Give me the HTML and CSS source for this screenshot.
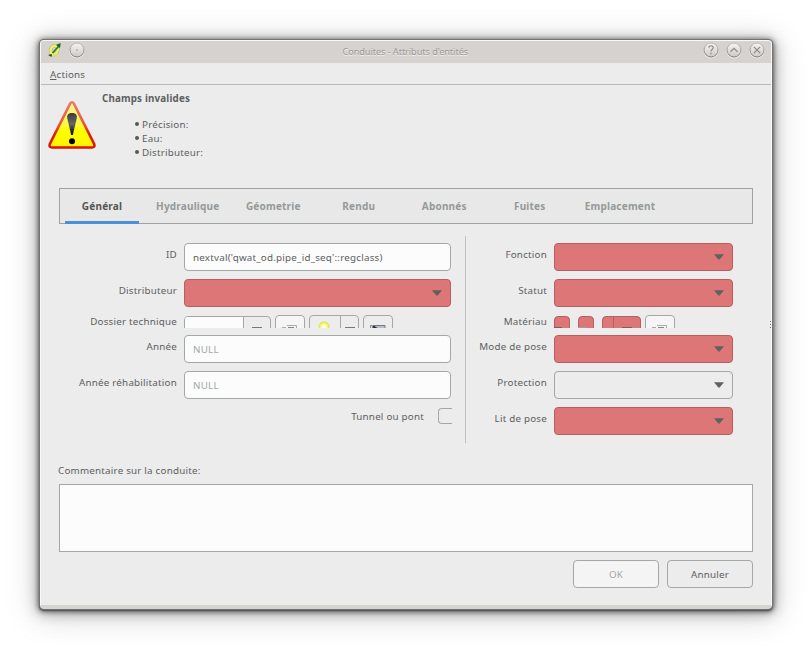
FILE: index.html
```html
<!DOCTYPE html>
<html lang="fr">
<head>
<meta charset="utf-8">
<title>Conduites - Attributs d'entités</title>
<link rel="stylesheet" href="styles.css">
</head>
<body>
<svg class="defs" width="0" height="0">
  <defs>
    <linearGradient id="knob" x1="0" y1="0" x2="0" y2="1"><stop offset="0" stop-color="#f6f5f4"/><stop offset="1" stop-color="#cdc9c5"/></linearGradient>
    <linearGradient id="ring" x1="0" y1="0" x2="0" y2="1"><stop offset="0" stop-color="#c0bbb7"/><stop offset="1" stop-color="#7c7875"/></linearGradient>
    <linearGradient id="warnFill" x1="0" y1="0" x2="0" y2="1"><stop offset="0" stop-color="#fff3a0"/><stop offset=".5" stop-color="#fff83a"/><stop offset=".62" stop-color="#ffff00"/><stop offset="1" stop-color="#fff200"/></linearGradient>
    <linearGradient id="warnEdge" x1="0" y1="0" x2="0" y2="1"><stop offset="0" stop-color="#ec7b6c"/><stop offset=".5" stop-color="#e8503c"/><stop offset=".7" stop-color="#e21b06"/><stop offset="1" stop-color="#dd1500"/></linearGradient>
    <linearGradient id="warnMark" x1="0" y1="0" x2="0" y2="1"><stop offset="0" stop-color="#3c3c3c"/><stop offset=".5" stop-color="#666"/><stop offset="1" stop-color="#000"/></linearGradient>
    <symbol id="tri" viewBox="0 0 10 6"><path d="M0 .3H10L5.8 5.3Q5 6 4.2 5.3Z" fill="currentColor"/></symbol>
    <symbol id="form" viewBox="0 0 16 4"><path d="M0 2.500H4M0 3.500H5" stroke="#aaa"/><path d="M5 .5H14.500V4" fill="none" stroke="#aaa"/><path d="M6 2.500H12M6.500 4V2" fill="none" stroke="#888"/></symbol>
  </defs>
</svg>
<main class="window">
  <header class="titlebar">
    <svg class="app" width="14" height="16" viewBox="0 0 14 16"><path d="M9 3.500C6.500 1.500 3 3.500 2.500 7.500C2.200 11 5 12.500 7.500 11C10 9 10.500 5.500 9 3.500" fill="none" stroke="#b9bb4c" stroke-width="3.400"/><path d="M9 3.500C6.500 1.500 3 3.500 2.500 7.500C2.200 11 5 12.500 7.500 11C10 9 10.500 5.500 9 3.500" fill="none" stroke="#eeee7c" stroke-width="2.400"/><path d="M5 11C7.500 10.500 8 15 11.500 14" fill="none" stroke="#dde070" stroke-width="2"/><path d="M4.500 10L10.500 3.500" stroke="#2b7a2b" stroke-width="1.800"/><path d="M8 2L12.700 0L12 5Z" fill="#14671d"/><path d="M0 12L4 11L3.500 14Z" fill="#2c4b22"/></svg>
    <svg class="knob" width="16" height="17" viewBox="0 0 16 17"><circle cx="8" cy="8" r="7" fill="url(#knob)" stroke="url(#ring)"/><circle cx="8" cy="8" r=".8" fill="#999"/></svg>
    <h1>Conduites - Attributs d'entités</h1>
    <svg class="knob" width="16" height="17" viewBox="0 0 16 17"><circle cx="8" cy="8" r="7" fill="url(#knob)" stroke="url(#ring)"/><path d="M5.800 5.800C5.800 3 10.400 3.100 10.200 5.800C10 7.500 8 7.500 8 9.500M8 10.800V12.200" fill="none" stroke="#8c8885" stroke-width="1.200"/></svg>
    <svg class="knob" width="16" height="17" viewBox="0 0 16 17"><circle cx="8" cy="8" r="7" fill="url(#knob)" stroke="url(#ring)"/><path d="M4.500 9.700L8 6.300L11.500 9.700" fill="none" stroke="#8c8885" stroke-width="1.200"/></svg>
    <svg class="knob" width="16" height="17" viewBox="0 0 16 17"><circle cx="8" cy="8" r="7" fill="url(#knob)" stroke="url(#ring)"/><path d="M4.800 4.800L11.200 11.200M11.200 4.800L4.800 11.200" fill="none" stroke="#8c8885" stroke-width="1.200"/></svg>
  </header>
  <nav class="menu"><span><u>A</u>ctions</span></nav>
  <section class="alert">
    <svg class="warn" width="48" height="50" viewBox="0 0 48 50"><path d="M22 3.800Q24 .8 26 3.800L46.200 44Q47.200 47.500 44 47.500H4Q.8 47.500 1.800 44Z" fill="url(#warnFill)" stroke="url(#warnEdge)" stroke-width="2.600" stroke-linejoin="round"/><path d="M24 13C28.500 13 29.300 15.500 28.600 19L24.800 35H23.200L19.400 19C18.700 15.500 19.500 13 24 13Z" fill="url(#warnMark)"/><circle cx="24" cy="41.200" r="3" fill="#000"/></svg>
    <div>
      <h2>Champs invalides</h2>
      <ul><li>Précision:</li><li>Eau:</li><li>Distributeur:</li></ul>
    </div>
  </section>
  <nav class="tabs">
    <a class="active">Général</a><a>Hydraulique</a><a>Géometrie</a><a>Rendu</a><a>Abonnés</a><a>Fuites</a><a class="wide">Emplacement</a>
  </nav>
  <section class="form">
    <div class="col left">
      <div class="row"><label>ID</label><div class="field text">nextval('qwat_od.pipe_id_seq'::regclass)</div></div>
      <div class="row"><label>Distributeur</label><div class="field red"><svg class="tri"><use href="#tri"/></svg></div></div>
      <div class="row clip"><label>Dossier technique</label>
        <div class="tools">
          <div class="btn combo"><i class="entry"></i><i class="drop"></i></div>
          <div class="btn light w30"><svg width="16" height="4"><use href="#form"/></svg></div>
          <div class="btn w50"><i class="bulb"></i><i class="drop"></i></div>
          <div class="btn w30"><svg width="16" height="4" viewBox="0 0 16 4"><path d="M.5 4V.5H2.500V4" fill="#ddd" stroke="#888"/><path d="M3 0H15V4H3Z" fill="#b5bec7"/><path d="M3 0L9 4H3Z" fill="#29323a"/><path d="M3 .5H15V4" fill="none" stroke="#778"/></svg></div>
        </div>
      </div>
      <div class="row"><label>Année</label><div class="field text null">NULL</div></div>
      <div class="row"><label>Année réhabilitation</label><div class="field text null">NULL</div></div>
      <div class="checkrow"><label>Tunnel ou pont</label><i class="check"></i></div>
    </div>
    <div class="col right">
      <div class="row"><label>Fonction</label><div class="field red"><svg class="tri"><use href="#tri"/></svg></div></div>
      <div class="row"><label>Statut</label><div class="field red"><svg class="tri"><use href="#tri"/></svg></div></div>
      <div class="row clip"><label>Matériau</label>
        <div class="tools mat">
          <div class="btn bad w16"><i class="dash"></i></div><div class="btn bad w16"><i class="dash pale"></i></div>
          <div class="btn bad w39"><i class="drop"></i></div>
          <div class="btn light w30"><svg width="16" height="4"><use href="#form"/></svg></div>
        </div>
      </div>
      <div class="row"><label>Mode de pose</label><div class="field red"><svg class="tri"><use href="#tri"/></svg></div></div>
      <div class="row"><label>Protection</label><div class="field"><svg class="tri"><use href="#tri"/></svg></div></div>
      <div class="row"><label>Lit de pose</label><div class="field red"><svg class="tri"><use href="#tri"/></svg></div></div>
    </div>
    <div class="grip"><i></i><i></i><i></i></div>
  </section>
  <section class="comment">
    <label>Commentaire sur la conduite:</label>
    <div class="area"></div>
  </section>
  <footer><button disabled>OK</button><button>Annuler</button></footer>
</main>
</body>
</html>
```

FILE: styles.css
```css
* { box-sizing: border-box; }
body { margin: 0; height: 649px; overflow: hidden; background: #fff; padding: 40px; font: 9.800px/14px "Noto Sans", "Open Sans", sans-serif; letter-spacing: .22px; color: #5c605f; }
.defs { position: absolute; }
h1, h2, ul { margin: 0; padding: 0; }
i { display: block; }
svg { display: block; flex: none; }

.window { width: 732px; height: 569px; display: flex; flex-direction: column; background: #ececec; border: 1px solid #f8f8f8; border-width: 1px 1px 0; border-radius: 4px; overflow: hidden; border-bottom: 4px solid #d4d4d0;
  box-shadow: 0 0 0 1px #757371, 0 1px 1px 1px #555, 0 1px 5px 2px rgba(0,0,0,.5), 0 2px 14px 3px rgba(0,0,0,.26), 0 4px 32px 5px rgba(0,0,0,.15); }

.titlebar { height: 22px; flex: none; display: flex; align-items: flex-start; gap: 7px; padding: 1px 6px 0 5.5px; background: #d6d2cf; }
.app { margin: 1px 0 0 1px; }
.knob { filter: drop-shadow(0 1px 0 #f4f2f0); }
h1 { flex: 1; margin: 3px 0 0; padding-left: 23px; text-align: center; font-weight: 400; font-size: 9.200px; line-height: 14px; letter-spacing: -.08px; color: #9c9894; text-shadow: 0 1px 0 #f2f0ee; }

.menu { height: 22px; flex: none; padding: 5px 9px; border-bottom: 1px solid #bababa; }
.alert { display: flex; height: 103px; flex: none; padding: 7px 7px 0; }
.warn { margin: 8px 6px 0 0; }
h2 { font-size: inherit; line-height: 14px; font-weight: 700; letter-spacing: .17px; }
ul { list-style: none; margin: 12px 0 0 33px; }
li { display: flex; align-items: center; gap: 3px; }
li::before { content: ""; width: 4px; height: 4px; margin-top: -2px; border-radius: 50%; background: #555958; }

.tabs { flex: none; display: flex; width: 694px; height: 36px; margin-left: 18px; border: 1px solid #9fa2a1; background: #e8e8e8; font-size: 10px; font-weight: 700; letter-spacing: .2px; color: #959998; line-height: 35px; text-align: center; }
.tabs a { width: 85.5px; }
.tabs .active { width: 74px; margin: 0 6px 0 5px; border-bottom: 3px solid #4a90d9; color: #515655; height: 35px; }
.tabs .wide { width: 95px; }

.form { flex: none; display: flex; height: 219px; padding: 12px 0 0 18px; position: relative; }
.col { display: flex; flex-direction: column; gap: 8px; height: 207px; padding-top: 7px; }
.left { width: 407px; border-right: 1px solid #c0c0c0; }
.right { width: 268px; }
.row { display: flex; height: 28px; }
.row label { width: 118px; text-align: right; padding-top: 5px; flex: none; }
.right .row label { width: 81px; }
.field { width: 267px; height: 28px; margin-left: 7px; border: 1px solid #a5a7a6; border-radius: 4px; display: flex; align-items: center; justify-content: flex-end; padding-right: 7px; }
.right .field { width: 179px; margin-left: 7px; }
.field.text { background: #fcfcfc; justify-content: flex-start; padding: 2px 0 0 8px; }
.null { color: #a3a7a6; }
.red { background: #dd7676; border-color: #b75f60; }
.tri { width: 12px; height: 6px; color: #5f605f; }
.clip { height: 13px; overflow: hidden; margin-bottom: -1px; }
.row.clip label { padding-top: 0; line-height: 14px; }
.tools { display: flex; gap: 4px; margin-left: 7px; }
.btn { height: 28px; border: 1px solid #a5a7a6; border-radius: 4px; display: flex; justify-content: center; padding-top: 9px; }
.combo { width: 87px; margin-top: 1px; padding: 0; overflow: hidden; }
.entry { width: 59px; background: #fcfcfc; border-right: 1px solid #a5a7a6; }
.drop { flex: 1; height: 27px; position: relative; }
.drop::after { content: ""; position: absolute; left: calc(50% - 5px); top: 11px; width: 10px; height: 1px; background: #777; }
.combo .drop::after { top: 10px; }
.light { background: #f5f5f5; }
.w30 { width: 30px; }
.w50 { width: 50px; padding: 0; }
.w50 .drop { border-left: 1px solid #a5a7a6; }
.w16 { width: 16px; }
.w39 { width: 39px; padding: 0 0 0 10px; margin-right: 0; }
.bulb { width: 30px; height: 27px; background: radial-gradient(circle at 14px 11px, #fffff0 0 1px, #f4f45c 4px, #dfe04e 5px, transparent 6px); }
.bad { background: #dd7676; border-color: #b75f60; margin-top: 1px; }
.mat .w16 { margin-right: 4px; padding: 10px 0 0; justify-content: flex-start; }
.dash { width: 8px; height: 1px; margin-left: -1px; background: #7c5f60; }
.pale { background: #a99a9a; }
.mat .w39 .drop { border-left: 1px solid #b75f60; }
.mat .w39 .drop::after { top: 10px; background: #7c5f60; }
.checkrow { display: flex; justify-content: flex-end; height: 18px; padding-right: 13px; }
.checkrow label { padding-top: 3px; margin-right: 14px; }
.check { width: 14px; height: 16px; margin-top: 1px; border: 1px solid #a5a7a6; border-right: 0; border-radius: 4px 0 0 4px; }
.grip { margin: 85px -1px 0 auto; display: grid; gap: 2px; align-content: start; }
.grip i { width: 2px; height: 1px; background: #777; }

.comment { flex: none; padding: 21px 0 0 17px; }
.comment label { display: block; line-height: 14px; }
.area { width: 694px; height: 68px; margin: 6px 0 0 1px; border: 1px solid #a5a7a6; background: #fcfcfc; }
footer { display: flex; justify-content: flex-end; gap: 8px; padding: 8px 18px 0 0; }
button { width: 86px; height: 28px; padding: 2px 0 0; border: 1px solid #a5a7a6; border-radius: 4px; background: #ececec; font: inherit; letter-spacing: inherit; color: inherit; }
button:disabled { background: #f4f4f4; color: #a3a7a6; }
```
